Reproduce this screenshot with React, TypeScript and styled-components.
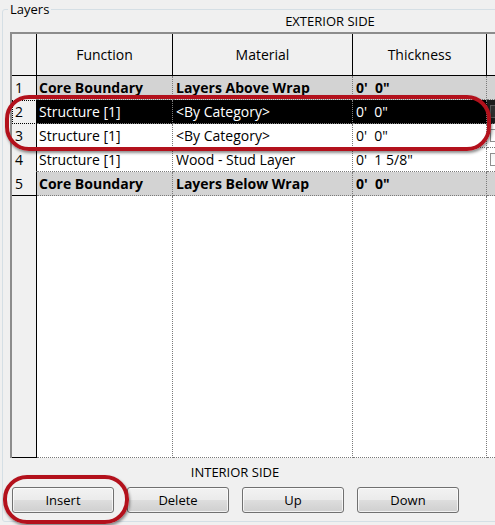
import React from 'react';
import styled, { createGlobalStyle, css } from 'styled-components';

const GlobalStyle = createGlobalStyle`
  html, body {
    margin: 0;
    padding: 0;
    background: #f0f0f0;
    overflow: hidden;
  }
  body {
    font-family: "Open Sans", "Liberation Sans", sans-serif;
    color: #000;
  }
`;

type RowKind = 'boundary' | 'selected' | 'plain';

interface Layer {
  n: number;
  fn: string;
  mat: string;
  th: string;
  kind: RowKind;
  check?: boolean;
}

const layers: Layer[] = [
  { n: 1, fn: 'Core Boundary', mat: 'Layers Above Wrap', th: `0'  0"`, kind: 'boundary' },
  { n: 2, fn: 'Structure [1]', mat: '<By Category>', th: `0'  0"`, kind: 'selected', check: true },
  { n: 3, fn: 'Structure [1]', mat: '<By Category>', th: `0'  0"`, kind: 'plain', check: true },
  { n: 4, fn: 'Structure [1]', mat: 'Wood - Stud Layer', th: `0'  1 5/8"`, kind: 'plain', check: true },
  { n: 5, fn: 'Core Boundary', mat: 'Layers Below Wrap', th: `0'  0"`, kind: 'boundary' },
];

const buttons = ['Insert', 'Delete', 'Up', 'Down'];

export default function App() {
  return (
    <Page>
      <GlobalStyle />
      <GroupBox>
        <Legend>Layers</Legend>
        <SideLabel $width={640}>EXTERIOR SIDE</SideLabel>
        <Grid>
          <HeaderCell $corner />
          <HeaderCell>Function</HeaderCell>
          <HeaderCell>Material</HeaderCell>
          <HeaderCell>Thickness</HeaderCell>
          <HeaderCell $last />
          {layers.map((l) => (
            <React.Fragment key={l.n}>
              <RowHeader $focused={l.kind === 'selected'} $last={l.n === layers.length}>
                {l.n}
              </RowHeader>
              <DataCell $kind={l.kind} $pad={2}>{l.fn}</DataCell>
              <DataCell $kind={l.kind}>{l.mat}</DataCell>
              <DataCell $kind={l.kind}>{l.th}</DataCell>
              <ExtraCell $kind={l.kind}>{l.check && <Check $dark={l.kind === 'selected'} />}</ExtraCell>
            </React.Fragment>
          ))}
          <FillerHeader />
          <Filler />
          <Filler />
          <Filler />
          <Filler $last />
        </Grid>
        <SideLabel $width={450} $gap>INTERIOR SIDE</SideLabel>
        <ButtonRow>
          {buttons.map((b) => (
            <Button key={b}>{b}</Button>
          ))}
        </ButtonRow>
      </GroupBox>
      <Mark $left={5} $top={95} $width={486} $height={56} />
      <Mark $left={3} $top={475} $width={126} $height={49} />
    </Page>
  );
}

const Page = styled.div`
  position: relative;
  width: 495px;
  height: 525px;
  overflow: hidden;
`;

const GroupBox = styled.fieldset`
  margin: 3px 0 0 2px;
  padding: 0 0 8px 7px;
  border: 1px solid #d5dfe5;
  border-radius: 3px;
  width: 700px;
  min-width: 0;
  box-sizing: border-box;
`;

const Legend = styled.legend`
  font-size: 13px;
  line-height: 12px;
  padding: 0 2px;
  margin-left: -2px;
`;

const SideLabel = styled.div<{ $width: number; $gap?: boolean }>`
  width: ${(p) => p.$width}px;
  text-align: center;
  font-size: 13px;
  line-height: 12px;
  margin: ${(p) => (p.$gap ? '8px 0 9px' : '0 0 5px')};
`;

const Grid = styled.div`
  display: grid;
  grid-template-columns: 25px 136px 180px 134px 40px;
  grid-template-rows: 42px repeat(5, 24px) 262px;
  width: max-content;
  border-top: 2px solid #8c8c8c;
  border-left: 2px solid #8c8c8c;
  font-size: 14px;
`;

const HeaderCell = styled.div<{ $corner?: boolean; $last?: boolean }>`
  display: flex;
  align-items: center;
  justify-content: center;
  background: #f0f0f0;
  border-bottom: 1px solid #000;
  border-right: ${(p) => (p.$last ? 'none' : '1px solid #000')};
  padding-bottom: 1px;
`;

const RowHeader = styled.div<{ $focused?: boolean; $last?: boolean }>`
  background: #f0f0f0;
  border-right: 1px solid #000;
  border-bottom: 1px solid ${(p) => (p.$last ? '#000' : 'transparent')};
  padding-left: 3px;
  line-height: 23px;
  ${(p) =>
    p.$focused &&
    css`
      outline: 1px dotted #000;
      outline-offset: -1px;
    `}
`;

const rowColors: Record<RowKind, string> = {
  boundary: '#d3d3d3',
  selected: '#000',
  plain: '#fff',
};

const DataCell = styled.div<{ $kind: RowKind; $pad?: number }>`
  background: ${(p) => rowColors[p.$kind]};
  color: ${(p) => (p.$kind === 'selected' ? '#fff' : '#000')};
  font-weight: ${(p) => (p.$kind === 'boundary' ? 700 : 400)};
  border-right: 1px dotted #7a7a7a;
  border-bottom: 1px dotted #7a7a7a;
  padding-left: ${(p) => p.$pad ?? 3}px;
  line-height: 23px;
  white-space: pre;
  overflow: hidden;
`;

const ExtraCell = styled.div<{ $kind: RowKind }>`
  background: ${(p) => (p.$kind === 'selected' ? '#1c1c1c' : rowColors[p.$kind])};
  border-bottom: 1px dotted #7a7a7a;
  padding: 5px 0 0 3px;
`;

const Check = styled.div<{ $dark?: boolean }>`
  width: 13px;
  height: 13px;
  box-sizing: border-box;
  border: 1px solid ${(p) => (p.$dark ? '#5a5a5a' : '#8f8f8f')};
  background: ${(p) => (p.$dark ? '#2e2e2e' : 'linear-gradient(#f4f4f4, #ffffff)')};
`;

const FillerHeader = styled.div`
  background: #f0f0f0;
  border-right: 1px solid #000;
  border-bottom: 1px solid #000;
`;

const Filler = styled.div<{ $last?: boolean }>`
  background: #fff;
  border-right: ${(p) => (p.$last ? 'none' : '1px dotted #7a7a7a')};
  border-bottom: 1px dotted #7a7a7a;
`;

const ButtonRow = styled.div`
  display: flex;
  gap: 13px;
  margin-left: 2px;
`;

const Button = styled.button`
  width: 102px;
  height: 26px;
  padding: 0;
  border: 1px solid #707070;
  border-radius: 3px;
  background: linear-gradient(#f2f2f2 0%, #ebebeb 48%, #dddddd 52%, #cfcfcf 100%);
  box-shadow: inset 0 0 0 1px rgba(255, 255, 255, 0.7);
  font-family: "Open Sans", "Liberation Sans", sans-serif;
  font-size: 13px;
  color: #000;
`;

const Mark = styled.div<{ $left: number; $top: number; $width: number; $height: number }>`
  position: absolute;
  left: ${(p) => p.$left}px;
  top: ${(p) => p.$top}px;
  width: ${(p) => p.$width}px;
  height: ${(p) => p.$height}px;
  box-sizing: border-box;
  border: 4px solid #b3111c;
  border-radius: 24px;
  box-shadow: 1px 2px 3px rgba(0, 0, 0, 0.45);
  pointer-events: none;
`;
